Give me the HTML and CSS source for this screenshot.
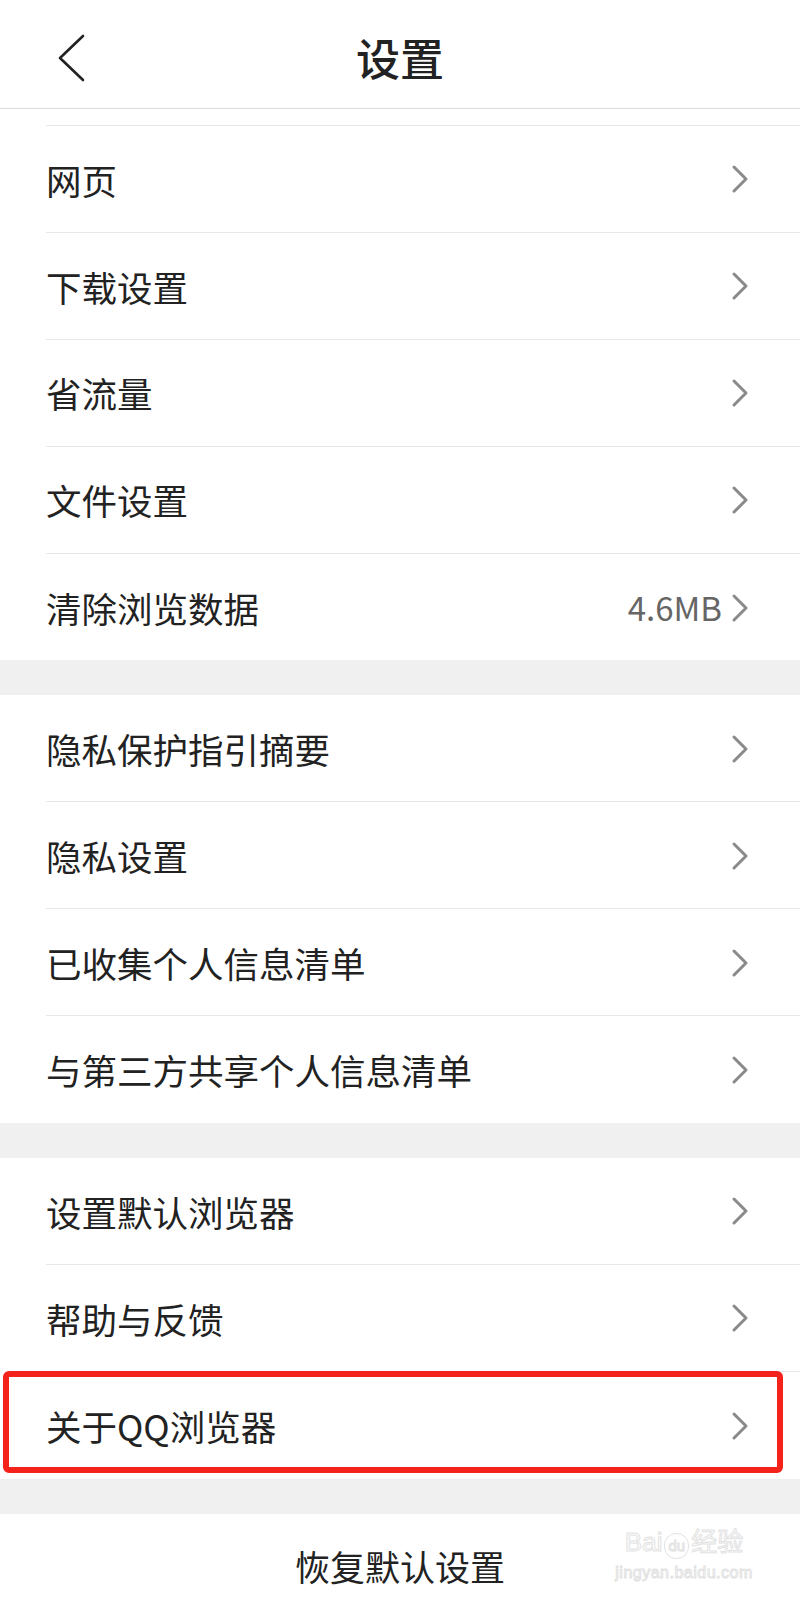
FILE: index.html
```html
<!DOCTYPE html>
<html lang="zh-CN">
<head>
    <meta charset="UTF-8">
    <meta name="viewport" content="width=device-width, initial-scale=1.0">
    <title>设置</title>
    <link rel="stylesheet" href="styles.css">
</head>
<body>

    <div class="page">
        <div class="topbar">
            <div class="back">
                <svg width="30" height="50" viewBox="0 0 30 50">
                    <path d="M26 3 L3 25 L26 47" fill="none" stroke="#222" stroke-width="2.6" stroke-linecap="round" stroke-linejoin="round"/>
                </svg>
            </div>
            <h1 class="title">设置</h1>
            <div></div>
        </div>

        <div class="group">
            <div class="peek"></div>
            <div class="row"><span>网页</span><span class="arrow"></span></div>
            <div class="row"><span>下载设置</span><span class="arrow"></span></div>
            <div class="row"><span>省流量</span><span class="arrow"></span></div>
            <div class="row"><span>文件设置</span><span class="arrow"></span></div>
            <div class="row"><span>清除浏览数据</span><span class="right"><span class="value">4.6MB</span><span class="arrow"></span></span></div>
        </div>

        <div class="gap"></div>

        <div class="group">
            <div class="row"><span>隐私保护指引摘要</span><span class="arrow"></span></div>
            <div class="row"><span>隐私设置</span><span class="arrow"></span></div>
            <div class="row"><span>已收集个人信息清单</span><span class="arrow"></span></div>
            <div class="row"><span>与第三方共享个人信息清单</span><span class="arrow"></span></div>
        </div>

        <div class="gap"></div>

        <div class="group">
            <div class="row"><span>设置默认浏览器</span><span class="arrow"></span></div>
            <div class="row"><span>帮助与反馈</span><span class="arrow"></span></div>
            <div class="row"><span>关于QQ浏览器</span><span class="arrow"></span></div>
        </div>

        <div class="gap"></div>

        <div class="reset">恢复默认设置</div>

        <!-- Markierung und Wasserzeichen liegen über dem Inhalt -->
        <div class="highlight"></div>
        <div class="watermark">
            <div class="wm-logo">Bai<span class="wm-paw">du</span>经验</div>
            <div class="wm-url">jingyan.baidu.com</div>
        </div>
    </div>

    <script>
        // Pfeile in alle Zeilen einsetzen
        document.querySelectorAll('.arrow').forEach(function (el) {
            el.innerHTML = '<svg width="18" height="30" viewBox="0 0 18 30">' +
                '<path d="M3 3 L15 15 L3 27" fill="none" stroke="#8a8a8a" stroke-width="3" stroke-linecap="round" stroke-linejoin="round"/>' +
                '</svg>';
        });
    </script>

</body>
</html>
```

FILE: styles.css
```css
/* Allgemeine Stile */
body {
    margin: 0;
    background-color: #fff;
    font-family: "Noto Sans CJK SC", "Noto Sans", sans-serif;
    color: #222;
}

.page {
    position: relative;
    width: 800px;
    min-height: 1600px;
    overflow: hidden;
}

/* Kopfzeile */
.topbar {
    height: 109px;
    border-bottom: 1px solid #dcdcdc;
    display: grid;
    grid-template-columns: 1fr auto 1fr;
    align-items: center;
    padding-top: 5px;
    box-sizing: border-box;
}

.back {
    padding-left: 57px;
    padding-top: 3px;
    display: flex;
    align-items: center;
}

.back svg {
    display: block;
}

.title {
    margin: 0;
    font-size: 44px;
    font-weight: 500;
    line-height: 1;
    color: #222;
}

/* Listen */
.group {
    background-color: #fff;
}

.peek {
    height: 16px;
    margin-left: 46px;
    border-bottom: 1px solid #e8e8e8;
}

.row {
    height: 106.9px;
    box-sizing: border-box;
    margin-left: 46px;
    padding-right: 51px;
    border-bottom: 1px solid #e8e8e8;
    display: flex;
    align-items: center;
    justify-content: space-between;
    font-size: 35.5px;
    line-height: 1;
    padding-top: 1px;
}

.row:last-child {
    border-bottom: none;
}

.right {
    display: flex;
    align-items: center;
    gap: 9px;
}

.value {
    font-size: 33px;
    color: #666;
}

.arrow {
    display: flex;
    align-items: center;
}

.arrow svg {
    display: block;
}

.gap {
    height: 35px;
    background-color: #f0f0f0;
}

.reset {
    height: 80px;
    padding-top: 12px;
    display: flex;
    align-items: center;
    justify-content: center;
    font-size: 35px;
    color: #222;
}

/* Rote Markierung */
.highlight {
    position: absolute;
    left: 3px;
    top: 1371px;
    width: 780px;
    height: 102px;
    box-sizing: border-box;
    border: 6px solid #f5221b;
    border-radius: 6px;
}

/* Wasserzeichen */
.watermark {
    position: absolute;
    left: 612px;
    top: 1522px;
    width: 144px;
    text-align: center;
    color: transparent;
    -webkit-text-stroke: 1px #e2e2e2;
    font-family: "Liberation Sans", "Noto Sans CJK SC", sans-serif;
}

.wm-logo {
    font-size: 26px;
    line-height: 40px;
    white-space: nowrap;
}

.wm-paw {
    display: inline-block;
    font-size: 15px;
    line-height: 24px;
    border: 1px solid #e2e2e2;
    border-radius: 12px;
    padding: 0 3px;
    margin: 0 2px;
}

.wm-url {
    font-size: 16px;
    line-height: 22px;
    letter-spacing: 0.5px;
}
```
